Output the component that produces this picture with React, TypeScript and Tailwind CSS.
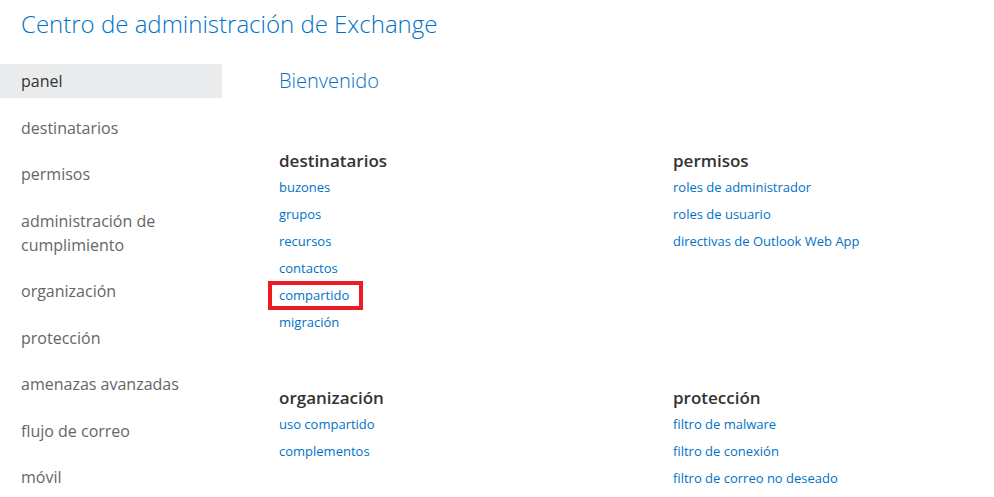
const navItems = [
  "panel",
  "destinatarios",
  "permisos",
  "administración de cumplimiento",
  "organización",
  "protección",
  "amenazas avanzadas",
  "flujo de correo",
  "móvil",
];

const sections = [
  {
    title: "destinatarios",
    links: ["buzones", "grupos", "recursos", "contactos", "compartido", "migración"],
  },
  {
    title: "permisos",
    links: ["roles de administrador", "roles de usuario", "directivas de Outlook Web App"],
  },
  {
    title: "organización",
    links: ["uso compartido", "complementos"],
  },
  {
    title: "protección",
    links: ["filtro de malware", "filtro de conexión", "filtro de correo no deseado"],
  },
];

const Section = ({ title, links }: { title: string; links: string[] }) => (
  <div>
    <h2 className="text-[17px] font-semibold leading-[26px] text-[#333333]">{title}</h2>
    <ul>
      {links.map((link) => (
        <li key={link} className="h-[27px] text-[13px] leading-[27px] text-[#0072c6]">
          <span className="relative inline-block h-[27px]">
            {link}
            {/* highlight box from the screenshot */}
            {link === "compartido" && (
              <span className="absolute left-[-11px] right-[-14px] top-[-1px] bottom-[-1px] border-4 border-[#ed1c24]" />
            )}
          </span>
        </li>
      ))}
    </ul>
  </div>
);

export default function App() {
  return (
    <div
      className="h-[497px] w-[994px] overflow-hidden bg-white"
      style={{ fontFamily: '"Open Sans", "Noto Sans", Arial, sans-serif' }}
    >
      <h1 className="pl-[21px] pt-[8px] text-[24px] font-light leading-[32px] text-[#0072c6]">
        Centro de administración de Exchange
      </h1>
      <div className="mt-[24px] flex">
        <nav className="h-[440px] w-[222px] shrink-0">
          <ul className="flex flex-col gap-[12.5px]">
            {navItems.map((item, i) => (
              <li
                key={item}
                className={
                  i === 0
                    ? "bg-[#eaebec] px-[21px] py-[5px] text-[16px] leading-[24px] text-[#333333]"
                    : "px-[21px] py-[5px] pr-[40px] text-[16px] leading-[24px] text-[#666666]"
                }
              >
                {item}
              </li>
            ))}
          </ul>
        </nav>
        <main className="flex-1 pl-[57px] shadow-[inset_4px_34px_0_-1px_#fff,inset_3px_0_4px_-2px_rgba(0,0,0,0.08)]">
          <div className="pt-[3px] text-[20px] font-light leading-[28px] text-[#0072c6]">Bienvenido</div>
          <div className="mt-[53px] grid w-[788px] grid-cols-2 gap-y-[49px]">
            {sections.map((s) => (
              <Section key={s.title} title={s.title} links={s.links} />
            ))}
          </div>
        </main>
      </div>
    </div>
  );
}
